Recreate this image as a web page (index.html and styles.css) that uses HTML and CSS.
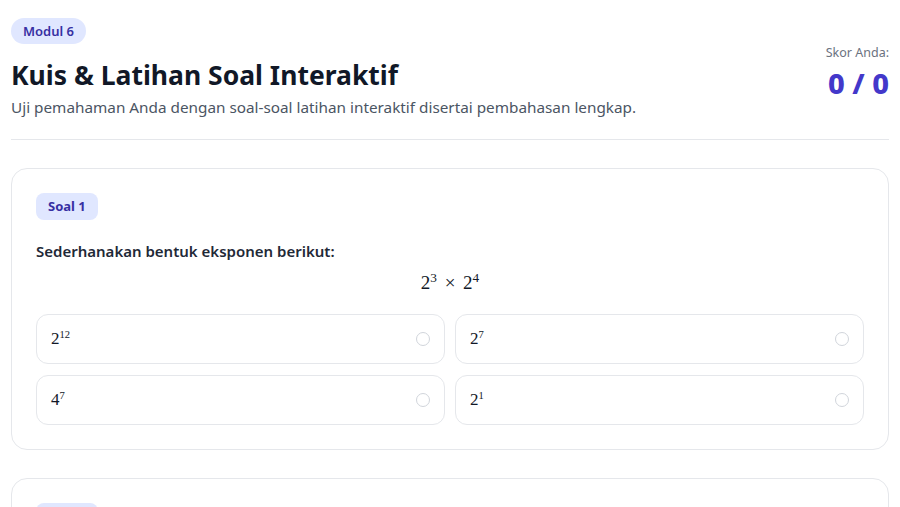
FILE: index.html
```html
<!DOCTYPE html>
<html lang="id">
<head>
    <meta charset="UTF-8">
    <meta name="viewport" content="width=device-width, initial-scale=1.0">
    <title>Kuis & Latihan Soal Interaktif</title>
    <link rel="stylesheet" href="styles.css">
</head>
<body>
    <div class="page">
        <header class="quiz-header">
            <div class="header-text">
                <span class="module-badge">Modul 6</span>
                <h1 class="quiz-title">Kuis &amp; Latihan Soal Interaktif</h1>
                <p class="quiz-subtitle">Uji pemahaman Anda dengan soal-soal latihan interaktif disertai pembahasan lengkap.</p>
            </div>
            <div class="score-box">
                <div class="score-label">Skor Anda:</div>
                <div class="score-value">0 / 0</div>
            </div>
        </header>

        <div class="question-card">
            <span class="question-badge">Soal 1</span>
            <p class="question-text">Sederhanakan bentuk eksponen berikut:</p>
            <div class="math-display">2<sup>3</sup> <span class="times">×</span> 2<sup>4</sup></div>

            <div class="options-grid">
                <label class="option">
                    <span class="math">2<sup>12</sup></span>
                    <span class="radio"></span>
                </label>
                <label class="option">
                    <span class="math">2<sup>7</sup></span>
                    <span class="radio"></span>
                </label>
                <label class="option">
                    <span class="math">4<sup>7</sup></span>
                    <span class="radio"></span>
                </label>
                <label class="option">
                    <span class="math">2<sup>1</sup></span>
                    <span class="radio"></span>
                </label>
            </div>
        </div>

        <div class="question-card">
            <span class="question-badge">Soal 2</span>
        </div>
    </div>
</body>
</html>
```

FILE: styles.css
```css
body {
    margin: 0;
    background: #ffffff;
    font-family: "Noto Sans", "Open Sans", sans-serif;
    color: #1f2937;
}

.page {
    padding: 18px 11px 0;
}

/* judul & skor */
.quiz-header {
    display: flex;
    justify-content: space-between;
    align-items: flex-end;
    padding-bottom: 21px;
    border-bottom: 1px solid #e5e7eb;
}

.module-badge {
    display: inline-block;
    background: #e0e7ff;
    color: #3730a3;
    font-size: 13px;
    font-weight: 600;
    padding: 3px 12px;
    border-radius: 999px;
    line-height: 20px;
}

.quiz-title {
    margin: 14px 0 4px;
    font-size: 26.5px;
    font-weight: 700;
    color: #111827;
    line-height: 34px;
}

.quiz-subtitle {
    margin: 0;
    font-size: 15.3px;
    color: #4b5563;
    line-height: 22px;
}

.score-box {
    text-align: right;
    padding-bottom: 18px;
}

.score-label {
    font-size: 12.5px;
    color: #6b7280;
    line-height: 18px;
}

.score-value {
    margin-top: 4px;
    font-size: 29px;
    font-weight: 800;
    color: #4338ca;
    line-height: 34px;
}

/* kartu soal */
.question-card {
    margin-top: 28px;
    border: 1px solid #e5e7eb;
    border-radius: 16px;
    padding: 24px;
    background: #fff;
}

.question-badge {
    display: inline-block;
    background: #e0e7ff;
    color: #3730a3;
    font-size: 13px;
    font-weight: 700;
    padding: 4px 12px;
    border-radius: 8px;
    line-height: 19px;
}

.question-text {
    margin: 20px 0 7px;
    font-size: 15px;
    font-weight: 600;
    color: #1f2937;
    line-height: 22px;
}

.math-display,
.math {
    font-family: "Liberation Serif", "DejaVu Serif", serif;
    color: #111827;
}

.math-display {
    text-align: center;
    font-size: 19px;
    line-height: 28px;
}

.math-display .times {
    margin: 0 3px;
}

sup {
    font-size: 0.7em;
    line-height: 0;
    vertical-align: 0.55em;
}

.options-grid {
    display: grid;
    grid-template-columns: 1fr 1fr;
    gap: 11px 10px;
    margin-top: 17px;
}

.option {
    display: flex;
    align-items: center;
    justify-content: space-between;
    height: 50px;
    box-sizing: border-box;
    padding: 0 14px;
    border: 1px solid #e5e7eb;
    border-radius: 12px;
    cursor: pointer;
}

.option .math {
    font-size: 17px;
}

.option .math sup {
    font-size: 0.62em;
}

.radio {
    width: 14px;
    height: 14px;
    box-sizing: border-box;
    border: 1.5px solid #d1d5db;
    border-radius: 50%;
}
```
